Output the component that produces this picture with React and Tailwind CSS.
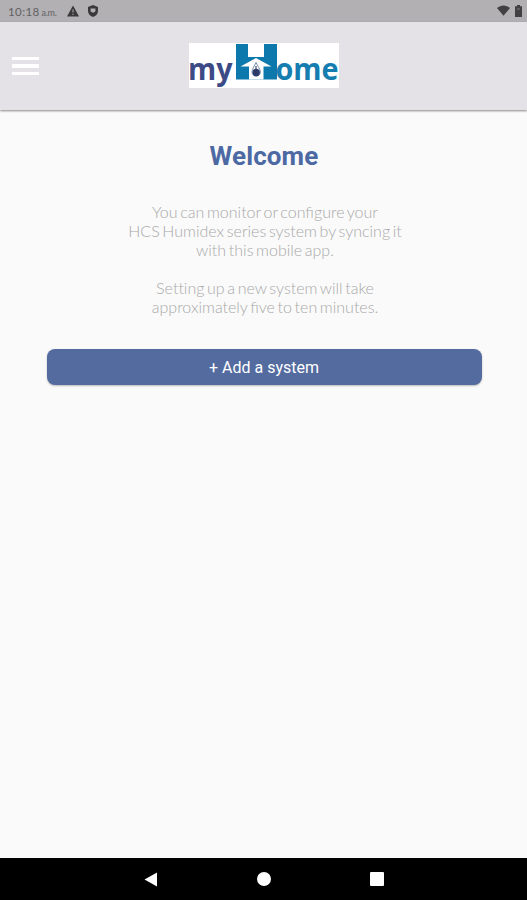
function StatusBar() {
  return (
    <div className="flex h-[22px] shrink-0 items-center bg-[#b2b0b3] pl-2 pr-[5px] text-[#626164]">
      <span className="w-[50px] whitespace-nowrap pt-px font-[Lato,sans-serif] text-[11.5px] leading-none tracking-[0.4px]">
        10:18<span className="text-[9px] tracking-[-0.3px]"> a.m.</span>
      </span>
      <svg className="ml-[9px] h-3 w-3" viewBox="0 0 12 12">
        <path d="M6 0.5 12 11.5H0Z" fill="#39383a" />
        <path d="M6 4.5v3M6 8.7v1.3" stroke="#aaa8ab" strokeWidth="1.1" />
      </svg>
      <svg className="ml-2 h-3 w-3" viewBox="0 0 12 12">
        <path d="M6 0 11 2v4c0 3-2 5-5 6C3 11 1 9 1 6V2Z" fill="#39383a" />
        <path d="M3.600 3.600h4.800v2.800L6 7.800 3.600 6.400Z" fill="#b2b0b3" />
      </svg>
      <svg className="mb-px ml-auto h-[11px] w-[13px]" viewBox="0 0 13 11">
        <path d="M0 3C3.8-.4 9.2-.4 13 3L6.5 10.7Z" fill="#414043" />
      </svg>
      <svg className="mb-px ml-[5px] h-3 w-[7px]" viewBox="0 0 7 12">
        <path d="M2 0h3v1.300h2V12H0V1.300h2Z" fill="#414043" />
        <path d="M2.300 4h2.400" stroke="#8b898c" />
      </svg>
    </div>
  );
}

function Logo() {
  return (
    <svg className="mb-px h-[45px] w-[150px] overflow-visible" viewBox="0 0 150 45" role="img" aria-label="myHome">
      <rect width="150" height="45" fill="#fff" />
      <g fontFamily="'Open Sans', sans-serif" fontWeight="700" fontSize="30.500">
        <text x="-1" y="36.800" textLength="44.500" lengthAdjust="spacingAndGlyphs" fill="#3c4b86">my</text>
        <text x="86.500" y="36.800" textLength="63" lengthAdjust="spacingAndGlyphs" fill="#167db0">ome</text>
      </g>
      <path d="M47 1h12v13h16V1h13v35.500H47Z" fill="#0c78ac" />
      <path d="M67 15 82.500 23.500H74.500v13H60v-13H51.500Z" fill="#fff" />
      <path d="M67 19.500c-1 3-4 6-4 9.500a4.200 4.200 0 0 0 8.400 0c0-3.500-3.400-6.500-4.400-9.500Z" fill="#fff" stroke="#6681a8" strokeWidth="0.900" />
      <circle cx="67.200" cy="29.500" r="3.700" fill="#2c3969" />
      <path d="M67 23v7" stroke="#2c3969" strokeWidth="1.100" />
    </svg>
  );
}

function Header() {
  return (
    <header className="z-10 grid h-[88px] shrink-0 grid-cols-[189px_150px_1fr] items-center bg-[#e4e2e7] shadow-[0_1px_2px_rgba(0,0,0,0.450)]">
      <button aria-label="Menu" className="ml-3 flex w-[27px] flex-col gap-1">
        <span className="h-[3.500px] bg-white" />
        <span className="h-[3.500px] bg-white" />
        <span className="h-[3.500px] bg-white" />
      </button>
      <Logo />
    </header>
  );
}

function NavBar() {
  return (
    <nav className="flex h-[42px] shrink-0 items-center bg-black pl-[144px]">
      <svg className="h-[15px] w-[14px]" viewBox="0 0 14 15">
        <path d="M0.500 7.500 13 0.500v14Z" fill="#fff" />
      </svg>
      <span className="ml-[99px] h-[14px] w-[14px] rounded-full bg-white" />
      <span className="ml-[99px] h-[14px] w-[14px] rounded-[1px] bg-white" />
    </nav>
  );
}

export default function App() {
  return (
    <div className="flex h-[900px] w-[527px] flex-col overflow-hidden bg-[#fafafa] font-[Roboto,sans-serif]">
      <StatusBar />
      <Header />
      <main className="flex flex-1 flex-col items-center pl-px">
        <h1 className="mt-[30px] text-[26px] font-bold leading-8 tracking-[0.1px] text-[#4c69a3]">Welcome</h1>
        <div className="mt-[30px] whitespace-nowrap pl-[2px] text-center font-[Lato,sans-serif] text-[16px] font-light leading-[19.200px] text-[#a9a9a9] [word-spacing:-1.7px]">
          <p>You can monitor or configure your</p>
          <p>HCS Humidex series system by syncing it</p>
          <p>with this mobile app.</p>
          <p className="mt-[18px]">
            <span className="[font-variant-ligatures:none]">Setting</span> up a new system will take
          </p>
          <p>approximately five to ten minutes.</p>
        </div>
        <button className="mt-[33px] h-[36px] w-[435px] rounded-lg bg-[#536b9f] pt-0.5 text-[16px] text-white shadow-[0_1px_2px_rgba(0,0,0,0.250)]">
          + Add a system
        </button>
      </main>
      <NavBar />
    </div>
  );
}
